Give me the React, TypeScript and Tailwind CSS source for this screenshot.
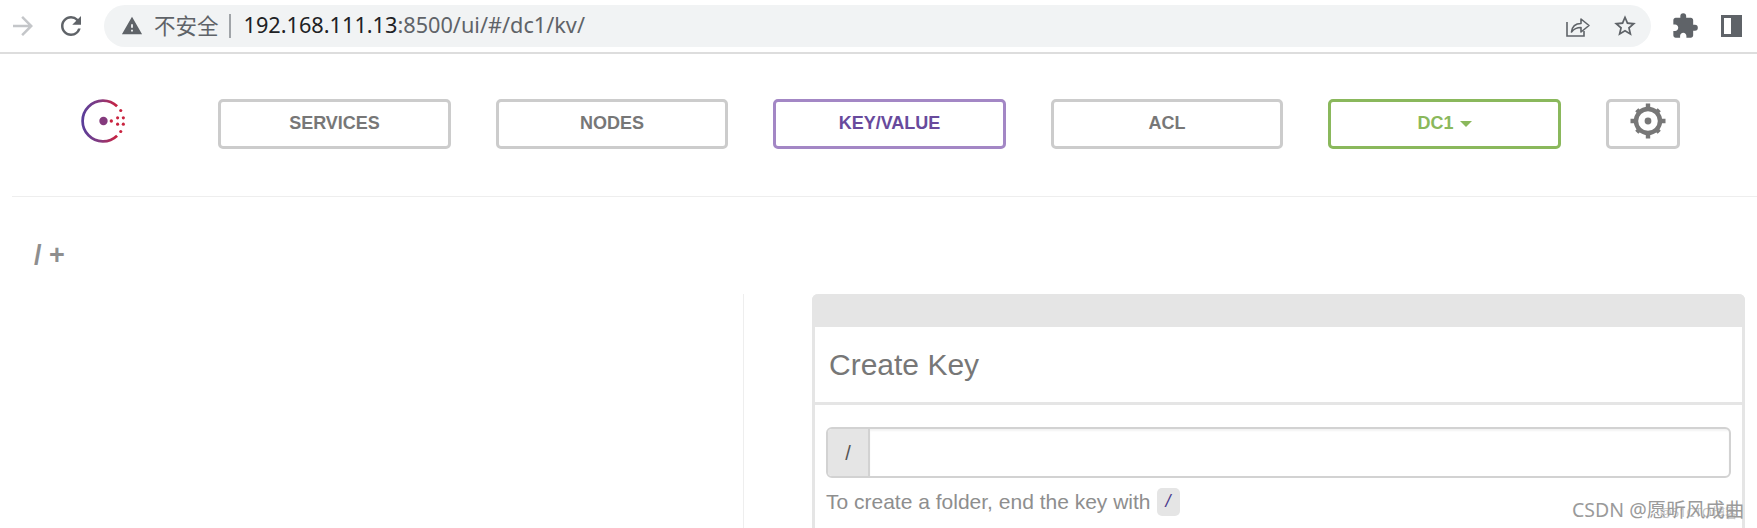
import { MdArrowForward, MdExtension, MdRefresh, MdStarBorder, MdWarning } from "react-icons/md";

const navItems = [
  { label: "SERVICES", width: "w-[233px]" },
  { label: "NODES", width: "w-[232px]" },
  { label: "KEY/VALUE", width: "w-[233px]", active: true },
  { label: "ACL", width: "w-[232px]" },
];

const ConsulLogo = () => (
  <svg width="46" height="46" viewBox="0 0 44 44" className="shrink-0">
    <defs>
      <linearGradient id="ring" x1="0" y1="0" x2="1" y2="0">
        <stop offset="0" stopColor="#5a3d99" />
        <stop offset="0.55" stopColor="#8a3a7c" />
        <stop offset="1" stopColor="#c9203f" />
      </linearGradient>
    </defs>
    <path
      d="M34.500 7.900 A19.500 19.500 0 1 0 34.500 36.100"
      fill="none"
      stroke="url(#ring)"
      strokeWidth="2.600"
    />
    <circle cx="21.500" cy="22" r="4" fill="#843a7d" />
    <circle cx="29" cy="22" r="1.600" fill="#c9233f" />
    <circle cx="38" cy="12" r="1.500" fill="#c9233f" />
    <circle cx="35" cy="19" r="1.500" fill="#c9233f" />
    <circle cx="40.500" cy="19" r="1.500" fill="#c9233f" />
    <circle cx="35" cy="25" r="1.500" fill="#c9233f" />
    <circle cx="40.500" cy="25" r="1.500" fill="#c9233f" />
    <circle cx="38" cy="32" r="1.500" fill="#c9233f" />
  </svg>
);

const Gear = () => (
  <svg width="36" height="36" viewBox="0 0 36 36" fill="#777777">
    <path d="M15.800 0.500h4.400v4.200h-4.400z M15.800 31.300h4.400v4.200h-4.400z M0.500 15.800h4.200v4.400H0.500z M31.300 15.800h4.200v4.400h-4.200z" />
    <path d="M5.200 8.300l3.100-3.100 3 3-3.100 3.100z M24.700 27.800l3.100-3.100 3 3-3.100 3.100z M5.200 27.700l3-3 3.100 3.100-3 3z M24.700 8.200l3-3 3.100 3.100-3 3z" />
    <circle cx="18" cy="18" r="12" fill="none" stroke="#777777" strokeWidth="4.400" />
    <circle cx="18" cy="18" r="3.400" />
  </svg>
);

const ShareIcon = () => (
  <svg width="26" height="26" viewBox="0 0 26 26" fill="none" stroke="#5f6368" strokeWidth="1.600">
    <path d="M2 9v14h17v-5" />
    <path d="M6.500 19c.6-5.500 4-8.500 9.500-8.500V6l8 6.500-8 6.500v-4.500c-4 0-7 1.200-9.500 4.500z" strokeLinejoin="round" />
  </svg>
);

export default function App() {
  return (
    <div className="relative h-[528px] w-[1757px] overflow-hidden bg-white font-['Liberation_Sans',Arial,sans-serif]">
      {/* browser toolbar */}
      <div className="flex h-[54px] items-center border-b-[2px] border-[#dddddd] pb-[1px] pl-[8px]">
        <MdArrowForward className="shrink-0 text-[30px] text-[#c4c6c9]" />
        <MdRefresh className="ml-[18px] shrink-0 text-[30px] text-[#5f6368]" />
        <div className="ml-[18px] flex h-[42px] w-[1547px] shrink-0 items-center rounded-full bg-[#f1f3f4] pl-[17px] font-['Noto_Sans','Noto_Sans_CJK_SC',sans-serif]">
          <MdWarning className="shrink-0 text-[22px] text-[#5f6368]" />
          <span className="ml-[11px] font-['Noto_Sans_CJK_SC',sans-serif] text-[21.500px] text-[#5f6368]">不安全</span>
          <span className="ml-[10px] h-[24px] w-[2px] bg-[#a0a4a8]" />
          <span className="ml-[13px] text-[21.700px] text-[#202124]">
            192.168.111.13<span className="text-[#5f6368]">:8500/ui/#/dc1/kv/</span>
          </span>
          <div className="ml-auto flex items-center pr-[13px]">
            <ShareIcon />
            <MdStarBorder className="ml-[21px] text-[26px] text-[#5f6368]" />
          </div>
        </div>
        <MdExtension className="ml-[20px] shrink-0 text-[28px] text-[#5f6368]" />
        <div className="ml-[22px] flex h-[22px] w-[21px] shrink-0 justify-end border-[3px] border-[#5f6368]">
          <div className="h-full w-[8px] bg-[#5f6368]" />
        </div>
      </div>

      {/* consul nav */}
      <div className="ml-[12px] flex h-[143px] border-b border-[#eeeeee]">
        <div className="flex pl-[69px] pt-[44px]">
          <ConsulLogo />
        </div>
        <div className="ml-[91px] flex gap-[45px] pt-[45px]">
          {navItems.map((item) => (
            <div
              key={item.label}
              className={`flex h-[50px] items-center justify-center rounded-[5px] border-[3px] pb-[2px] text-[18px] font-bold ${item.width} ${
                item.active ? "border-[#a387c5] text-[#684a9c]" : "border-[#cccccc] text-[#777777]"
              }`}
            >
              {item.label}
            </div>
          ))}
          <div className="flex h-[50px] w-[233px] items-center justify-center gap-[6px] rounded-[5px] border-[3px] border-[#8ab85c] pb-[2px] text-[18px] font-bold text-[#8ab85c]">
            DC1
            <span className="mt-[2px] h-0 w-0 border-x-[6px] border-t-[6px] border-x-transparent border-t-[#8ab85c]" />
          </div>
          <div className="flex h-[50px] w-[74px] justify-center rounded-[5px] border-[3px] border-[#cccccc] pl-[10px] pt-[1px]">
            <Gear />
          </div>
        </div>
      </div>

      {/* breadcrumb */}
      <div className="flex h-[97px] items-start pl-[34px] pt-[44px] text-[27px] leading-[28px] font-bold text-[#8e8e8e]">
        / +
      </div>

      {/* kv columns */}
      <div className="flex h-[300px]">
        <div className="ml-[743px] w-[69px] shrink-0 border-l border-[#eeeeee]" />
        <div className="w-[933px] shrink-0 rounded-t-[6px] border-x-[3px] border-[#e5e5e5]">
          <div className="-mx-[3px] h-[33px] rounded-t-[6px] bg-[#e5e5e5]" />
          <div className="flex h-[78px] items-center border-b-[3px] border-[#e5e5e5] pl-[14px] text-[30px] text-[#777777]">
            Create Key
          </div>
          <div className="px-[11px] pt-[22px]">
            <div className="flex h-[51px] w-[905px] overflow-hidden rounded-[6px] border-[2px] border-[#d2d2d2]">
              <div className="flex w-[42px] shrink-0 items-center justify-center border-r-[2px] border-[#d2d2d2] bg-[#e5e5e5] text-[20px] text-[#555555]">
                /
              </div>
              <div className="flex-1 shadow-[inset_0_2px_2px_rgba(0,0,0,0.05)]" />
            </div>
            <div className="mt-[8px] flex items-center text-[21px] text-[#8e8e8e]">
              To create a folder, end the key with
              <code className="ml-[6px] flex h-[28px] w-[23px] items-center justify-center rounded-[5px] bg-[#e5e5e5] font-['Liberation_Sans',sans-serif] text-[18px] italic text-[#4a3a8c]">
                /
              </code>
            </div>
          </div>
        </div>
      </div>

      {/* watermark */}
      <div className="absolute left-[1660px] top-[503px] font-['Noto_Sans','Noto_Sans_CJK_SC',sans-serif] text-[13px] whitespace-nowrap text-[#c4c4c4]">
        @51CTO博客
      </div>
      <div className="absolute left-[1572px] top-[495px] font-['Noto_Sans','Noto_Sans_CJK_SC',sans-serif] text-[19.500px] whitespace-nowrap text-[#9a9a9a]">
        CSDN @愿昕风成曲
      </div>
    </div>
  );
}
